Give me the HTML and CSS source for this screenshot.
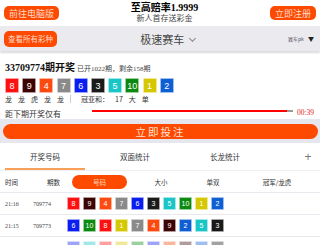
FILE: index.html
```html
<!DOCTYPE html>
<html lang="zh">
<head>
    <meta charset="UTF-8">
    <meta name="viewport" content="width=device-width, initial-scale=1.0">
    <title>极速赛车</title>
    <link rel="stylesheet" href="styles.css">
</head>
<body>
    <header class="top">
        <a class="btn btn-small">前往电脑版</a>
        <div class="promo">
            <div class="promo-title">至高赔率1.9999</div>
            <div class="promo-sub">新人首存送彩金</div>
        </div>
        <a class="btn btn-small">立即注册</a>
    </header>

    <nav class="bar">
        <a class="btn btn-tiny">查看所有彩种</a>
        <div class="bar-title">极速赛车 <span class="chev"></span></div>
        <div class="bar-right">赛车pk <span class="tri">▼</span></div>
    </nav>

    <section class="draw">
        <div class="draw-head">
            <span class="issue">33709774期开奖</span>
            <span class="issue-info">已开1022期，剩余158期</span>
        </div>
        <div class="balls big">
            <span class="ball c8">8</span><span class="ball c9">9</span><span class="ball c4">4</span><span class="ball c7">7</span><span class="ball c6">6</span><span class="ball c3">3</span><span class="ball c5">5</span><span class="ball c10">10</span><span class="ball c1">1</span><span class="ball c2">2</span>
        </div>
        <div class="draw-stats">
            <span>龙</span><span>龙</span><span>虎</span><span>龙</span><span>龙</span>
            <span class="sep"></span>
            <span>冠亚和：</span><span>17</span><span>大</span><span>单</span>
        </div>
        <div class="countdown">
            <span class="cd-label">距下期开奖仅有</span>
            <div class="cd-track"><div class="cd-fill" style="width: 97%"></div></div>
            <span class="cd-time">00:39</span>
        </div>
    </section>

    <div class="bet-band">
        <a class="bet-btn">立即投注</a>
    </div>

    <div class="tabs">
        <div class="tab active">开奖号码</div>
        <div class="tab">双面统计</div>
        <div class="tab">长龙统计</div>
        <div class="tab-plus">+</div>
    </div>

    <div class="thead">
        <span class="col-time">时间</span>
        <span class="col-issue">期数</span>
        <span class="col-pill">号码</span>
        <span class="col-size">大小</span>
        <span class="col-odd">单双</span>
        <span class="col-champ">冠军/龙虎</span>
    </div>

    <div class="row">
        <span class="r-time">21:16</span>
        <span class="r-issue">709774</span>
        <div class="balls">
            <span class="ball c8">8</span><span class="ball c9">9</span><span class="ball c4">4</span><span class="ball c7">7</span><span class="ball c6">6</span><span class="ball c3">3</span><span class="ball c5">5</span><span class="ball c10">10</span><span class="ball c1">1</span><span class="ball c2">2</span>
        </div>
    </div>
    <div class="row">
        <span class="r-time">21:15</span>
        <span class="r-issue">709773</span>
        <div class="balls">
            <span class="ball c6">6</span><span class="ball c10">10</span><span class="ball c8">8</span><span class="ball c1">1</span><span class="ball c7">7</span><span class="ball c4">4</span><span class="ball c9">9</span><span class="ball c2">2</span><span class="ball c5">5</span><span class="ball c3">3</span>
        </div>
    </div>
    <div class="row faded">
        <span class="r-time">21:14</span>
        <span class="r-issue">709772</span>
        <div class="balls">
            <span class="ball c6">6</span><span class="ball c5">5</span><span class="ball c8">8</span><span class="ball c1">1</span><span class="ball c10">10</span><span class="ball c6">6</span><span class="ball c4">4</span><span class="ball c9">9</span><span class="ball c2">2</span><span class="ball c3">3</span>
        </div>
    </div>
</body>
</html>
```

FILE: styles.css
```css
body {
    margin: 0;
    font-family: "Liberation Serif", "Noto Sans CJK SC", serif;
    color: #333;
    background: #fff;
    width: 320px;
    overflow: hidden;
}
.btn {
    display: inline-flex;
    align-items: center;
    justify-content: center;
    background: #fe4a00;
    color: #ffd9c8;
    font-family: "Noto Sans CJK SC", sans-serif;
    border-radius: 5px;
}
.btn-small {
    height: 14px;
    padding: 0 5px;
    font-size: 9px;
}
.btn-tiny {
    height: 16px;
    padding: 0 4px;
    font-size: 7.5px;
}
.top {
    height: 26px;
    display: flex;
    align-items: center;
    justify-content: space-between;
    padding: 0 4px;
}
.promo {
    text-align: center;
    line-height: 1;
}
.promo-title {
    font-size: 10px;
    font-weight: bold;
    color: #000;
}
.promo-sub {
    font-size: 8px;
    margin-top: 2px;
    color: #444;
}
.bar {
    height: 25px;
    background: #ebebef;
    display: flex;
    align-items: center;
    padding: 0 4px;
    box-shadow: 0 2px 2px rgba(0, 0, 0, 0.15);
    position: relative;
}
.bar-title {
    flex: 1;
    text-align: center;
    font-family: "Noto Sans CJK SC", sans-serif;
    font-size: 11px;
    color: #444;
    padding-right: 10px;
}
.chev {
    display: inline-block;
    width: 4px;
    height: 4px;
    border-right: 1px solid #888;
    border-bottom: 1px solid #888;
    transform: rotate(45deg);
    margin: 0 0 3px 3px;
}
.bar-right {
    font-family: "Noto Sans CJK SC", sans-serif;
    font-size: 5px;
    color: #556;
    padding-right: 2px;
}
.tri {
    font-size: 6px;
    color: #222;
    margin-left: 3px;
}
.draw {
    padding: 8px 5px 0;
}
.draw-head {
    display: flex;
    align-items: baseline;
    gap: 2px;
}
.issue {
    font-size: 10px;
    font-weight: bold;
    color: #111;
}
.issue-info {
    font-size: 7px;
    color: #444;
}
.balls {
    display: flex;
    gap: 3px;
}
.ball {
    width: 11px;
    height: 11px;
    display: flex;
    align-items: center;
    justify-content: center;
    font-family: "Liberation Sans", sans-serif;
    font-size: 7px;
    color: #fff;
    border: 0.5px solid rgba(255, 255, 255, 0.6);
    border-radius: 1px;
}
.big {
    margin-top: 4px;
    gap: 3.2px;
}
.big .ball {
    width: 12px;
    height: 13px;
    font-size: 9px;
}
.c1 { background: #d5c700; }
.c2 { background: #0f5fd4; }
.c3 { background: #1a1a1a; }
.c4 { background: #fc4a10; }
.c5 { background: #1ac5c8; }
.c6 { background: #0a1ef0; }
.c7 { background: #8a8a8a; }
.c8 { background: #ff1010; }
.c9 { background: #3e0404; }
.c10 { background: #0a8a10; }
.draw-stats {
    display: flex;
    align-items: center;
    gap: 6px;
    margin-top: 1px;
    font-family: "Noto Sans CJK SC", sans-serif;
    font-size: 7px;
    color: #333;
}
.sep {
    width: 1px;
    height: 8px;
    background: #ccc;
    margin: 0 4px 0 0;
}
.countdown {
    display: flex;
    align-items: center;
    margin-top: 5px;
    height: 8px;
}
.cd-label {
    font-family: "Noto Sans CJK SC", sans-serif;
    font-size: 8px;
    color: #333;
    width: 87px;
}
.cd-track {
    width: 201px;
    height: 2px;
    background: #999;
    margin-bottom: 5px;
}
.cd-fill {
    height: 100%;
    background: #f00;
}
.cd-time {
    font-size: 7.5px;
    color: #e02020;
    margin-left: 4px;
    margin-bottom: 2px;
}
.bet-band {
    background: #e6e6ee;
    padding: 5px 2px 4px 3px;
    margin-top: 2px;
}
.bet-btn {
    display: flex;
    align-items: center;
    justify-content: center;
    height: 15px;
    border-radius: 8px;
    background: #fe4a00;
    color: #ffe2d4;
    font-family: "Noto Sans CJK SC", sans-serif;
    font-size: 10.5px;
    letter-spacing: 2px;
}
.tabs {
    display: flex;
    height: 27px;
    border-bottom: 1px solid #eee;
    font-family: "Noto Sans CJK SC", sans-serif;
    font-size: 7.5px;
    color: #333;
}
.tab {
    width: 90px;
    display: flex;
    align-items: center;
    justify-content: center;
}
.tab.active {
    box-shadow: inset 0 -2px 0 #f8a05a;
    margin: 0 5px;
    width: 80px;
}
.tab-plus {
    margin-left: auto;
    width: 24px;
    display: flex;
    align-items: center;
    justify-content: center;
    font-family: "Liberation Sans", sans-serif;
    font-size: 12px;
    color: #777;
}
.thead {
    display: flex;
    align-items: center;
    height: 21px;
    padding-left: 5px;
    border-bottom: 1px solid #e8e8ee;
    font-family: "Noto Sans CJK SC", sans-serif;
    font-size: 6.5px;
    color: #333;
}
.col-time { width: 42px; }
.col-issue { width: 25px; }
.col-pill {
    width: 55px;
    height: 14px;
    border-radius: 7px;
    background: #fe4a00;
    color: #ffd2bd;
    display: flex;
    align-items: center;
    justify-content: center;
}
.col-size { width: 56px; text-align: center; margin-left: 6px; }
.col-odd { width: 48px; text-align: center; }
.col-champ { width: 80px; text-align: center; }
.row {
    display: flex;
    align-items: center;
    height: 21px;
    padding-left: 5px;
    border-bottom: 1px solid #e8e8ee;
    font-size: 6px;
    color: #444;
}
.r-time { width: 28px; }
.r-issue { width: 34px; }
.faded .ball { opacity: 0.4; }
```
